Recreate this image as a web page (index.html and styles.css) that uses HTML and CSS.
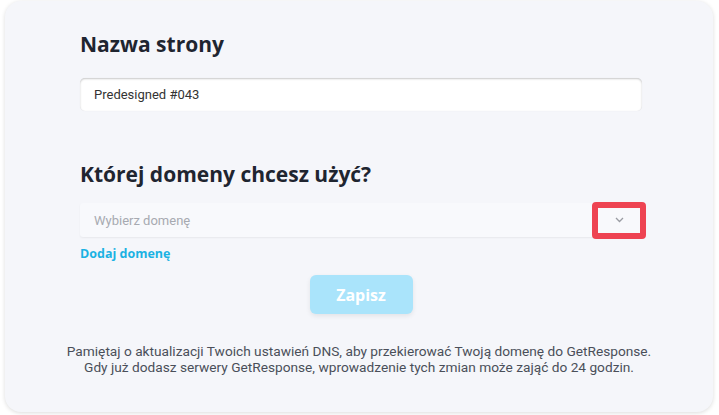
FILE: index.html
```html
<!DOCTYPE html>
<html lang="pl">
<head>
    <meta charset="UTF-8">
    <meta name="viewport" content="width=device-width, initial-scale=1.0">
    <title>Ustawienia strony</title>
    <link rel="stylesheet" href="styles.css">
</head>
<body>
    <div class="card">
        <div class="content">
            <h1>Nazwa strony</h1>
            <div class="field">Predesigned #043</div>

            <h2>Której domeny chcesz użyć?</h2>
            <div class="select">
                <span class="placeholder">Wybierz domenę</span>
                <span class="arrow">
                    <svg width="9" height="6" viewBox="0 0 9 6"><path d="M1 1l3.5 3.5L8 1" fill="none" stroke="#9a9ca3" stroke-width="1.3"/></svg>
                </span>
                <span class="highlight"></span>
            </div>
            <a class="add-link" href="#">Dodaj domenę</a>

            <div class="actions">
                <button class="save">Zapisz</button>
            </div>
        </div>
        <p class="note">Pamiętaj o aktualizacji Twoich ustawień DNS, aby przekierować Twoją domenę do GetResponse.<br>Gdy już dodasz serwery GetResponse, wprowadzenie tych zmian może zająć do 24 godzin.</p>
    </div>
</body>
</html>
```

FILE: styles.css
```css
body {
    margin: 0;
    padding: 1px 6px 3px 5px;
    background: #fff;
    font-family: Roboto, "Liberation Sans", sans-serif;
    color: #1f2530;
}
.card {
    height: 411px;
    box-sizing: border-box;
    background: #f5f6fa;
    border-radius: 16px;
    box-shadow: 0 1px 4px rgba(0,0,0,0.14);
    padding-top: 28px;
}
.content {
    width: 562px;
    margin-left: 75px;
}
h1, h2 {
    font-family: "Open Sans", sans-serif;
    font-weight: 700;
    font-size: 21px;
    line-height: 30px;
    margin: 0;
    color: #1f2530;
}
.field {
    margin-top: 19px;
    height: 33px;
    box-sizing: border-box;
    background: #fff;
    border-radius: 5px;
    box-shadow: inset 0 1px 2px rgba(0,0,0,0.22), 0 0 1px rgba(0,0,0,0.08);
    padding: 0 14px;
    font-size: 13px;
    line-height: 34px;
    color: #333;
}
h2 {
    margin-top: 48px;
}
.select {
    position: relative;
    margin-top: 14px;
    height: 34px;
    background: #f8f9fc;
    border-radius: 3px;
    box-shadow: 0 1px 2px rgba(0,0,0,0.06);
    display: flex;
    align-items: center;
    justify-content: space-between;
    padding: 0 14px;
}
.placeholder {
    font-size: 13px;
    color: #a7aab1;
}
.arrow {
    display: flex;
    margin-right: 4px;
}
.highlight {
    position: absolute;
    left: 512px;
    top: -1px;
    width: 54px;
    height: 37px;
    box-sizing: border-box;
    border: 6px solid #ee4352;
    border-radius: 4px;
}
.add-link {
    display: block;
    margin-top: 8px;
    font-family: "Open Sans", sans-serif;
    font-weight: 700;
    font-size: 12.5px;
    line-height: 18px;
    color: #1bb2e3;
    text-decoration: none;
}
.actions {
    margin-top: 12px;
    display: flex;
    justify-content: center;
}
.save {
    width: 103px;
    height: 39px;
    border: none;
    border-radius: 6px;
    background: #aae4fb;
    color: #fff;
    font-family: "Open Sans", sans-serif;
    font-weight: 700;
    font-size: 16px;
    box-shadow: 0 2px 5px rgba(0,0,0,0.08);
    cursor: pointer;
}
.note {
    margin: 30px 0 0;
    text-align: center;
    font-size: 13.7px;
    line-height: 15.5px;
    color: #4a4f59;
}
```
